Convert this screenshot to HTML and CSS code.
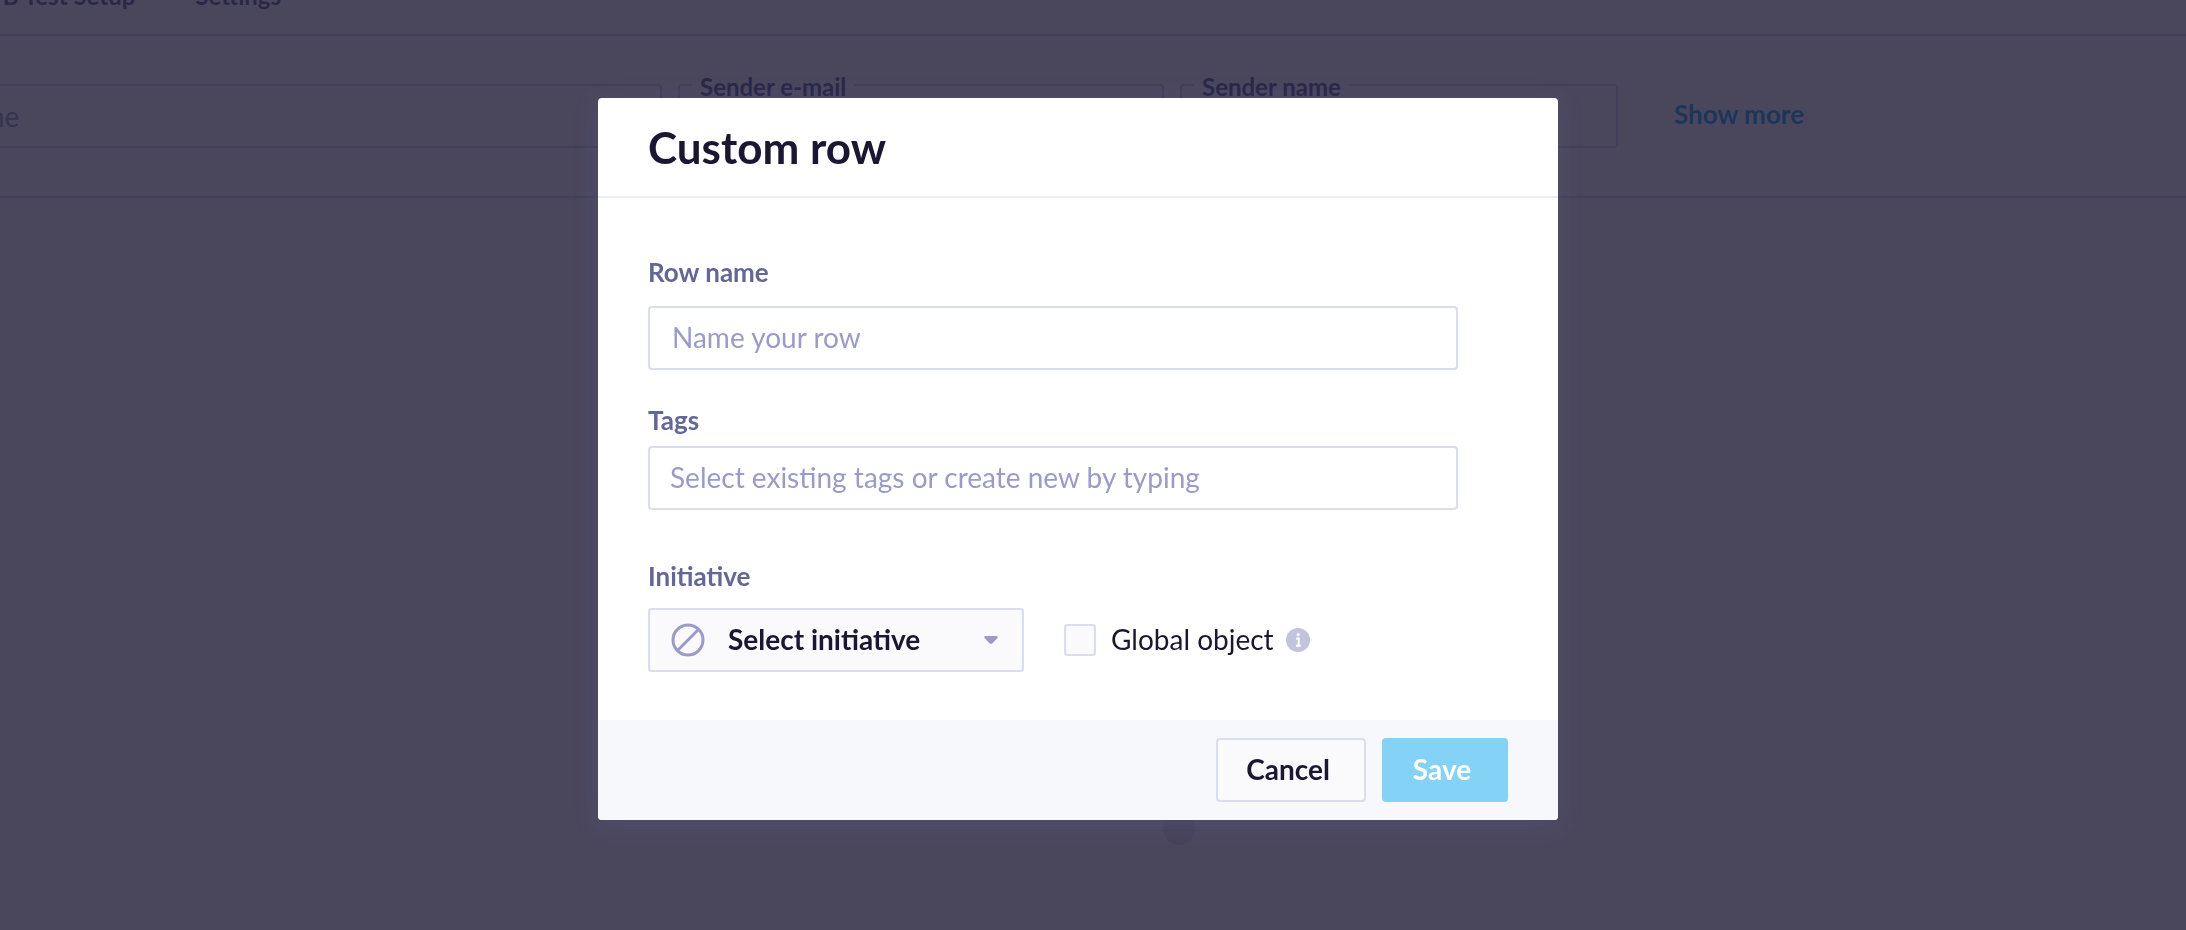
FILE: index.html
```html
<!DOCTYPE html>
<html lang="en">
<head>
<meta charset="utf-8">
<title>Custom row</title>
<link rel="stylesheet" href="styles.css">
</head>
<body>
<div class="page">
  <nav class="tabs">
    <a class="tab" href="#">A/B Test Setup</a>
    <a class="tab" href="#">Settings</a>
  </nav>
  <form class="settings">
    <fieldset class="outlined outlined-first">
      <input class="outlined-input" type="text" placeholder="name" aria-label="Name">
    </fieldset>
    <fieldset class="outlined outlined-email">
      <legend>Sender e-mail</legend>
      <input class="outlined-input" type="email" aria-label="Sender e-mail">
    </fieldset>
    <fieldset class="outlined outlined-name">
      <legend>Sender name</legend>
      <input class="outlined-input" type="text" aria-label="Sender name">
    </fieldset>
    <a class="show-more" href="#">Show more</a>
  </form>
  <main class="canvas"><span class="handle"></span></main>
</div>

<div class="overlay">
  <form class="modal" role="dialog" aria-labelledby="modal-title">
    <header class="modal-header">
      <h1 id="modal-title">Custom row</h1>
    </header>
    <div class="modal-body">
      <div class="field field-name">
        <label for="row-name">Row name</label>
        <input class="text-input" id="row-name" type="text" placeholder="Name your row">
      </div>
      <div class="field field-tags">
        <label for="tags">Tags</label>
        <input class="text-input" id="tags" type="text" placeholder="Select existing tags or create new by typing">
      </div>
      <div class="field field-initiative">
        <label for="initiative">Initiative</label>
        <div class="initiative-row">
          <div class="select">
            <svg class="select-icon" viewBox="0 0 34 34" aria-hidden="true"><circle cx="17" cy="17" r="15"/><path d="M6.8 27.2 27.2 6.8"/></svg>
            <select id="initiative"><option>Select initiative</option></select>
            <svg class="select-caret" viewBox="0 0 14 8" aria-hidden="true"><path d="M1.6 0h10.8c1.2 0 1.8 1 1 2L8.6 7.2c-.9 1-2.3 1-3.2 0L.6 2C-.2 1 .4 0 1.6 0z"/></svg>
          </div>
          <input class="checkbox" id="global" type="checkbox">
          <label class="checkbox-label" for="global">Global object</label>
          <svg class="info" viewBox="0 0 24 24" role="img" aria-label="Info"><circle class="info-disc" cx="12" cy="12" r="12"/><circle class="info-dot" cx="12.2" cy="6.6" r="1.6"/><path d="M10.2 10.6h2.5v7M10 17.7h4.7"/></svg>
        </div>
      </div>
    </div>
    <footer class="modal-footer">
      <button class="button button-cancel" type="button">Cancel</button>
      <button class="button button-save" type="submit">Save</button>
    </footer>
  </form>
</div>
</body>
</html>
```
FILE: styles.css
```css
* {
  box-sizing: border-box;
}

body {
  margin: 0;
  height: 100vh;
  overflow: hidden;
  background: #fff;
  color: #1b1733;
  font-family: Lato, "Liberation Sans", sans-serif;
  font-size: 28px;
}

input,
select,
button {
  font: inherit;
  color: inherit;
}

a {
  text-decoration: none;
}

/* Page behind the dialog */
.page {
  display: flex;
  flex-direction: column;
  height: 100%;
}

.tabs {
  display: flex;
  gap: 60px;
  height: 36px;
  margin-left: -25px;
  border-bottom: 2px solid #dedcf4;
}

.tab {
  margin-top: -20px;
  color: #646699;
  font-size: 24px;
  font-weight: 700;
  line-height: 32px;
}

.settings {
  display: flex;
  align-items: flex-end;
  height: 162px;
  padding-bottom: 48px;
  border-bottom: 2px solid #dedcf4;
}

.outlined {
  flex: none;
  height: 64px;
  margin: 0 16px 0 0;
  padding: 0;
  border: 2px solid #d9d6f0;
  border-radius: 4px;
}

.outlined:has(legend) {
  height: 81px;
}

.outlined legend {
  margin-left: 12px;
  padding: 4px 8px 0;
  color: #646699;
  font-size: 24px;
  font-weight: 700;
  line-height: 32px;
}

.outlined-first {
  width: 722px;
  margin-left: -60px;
}

.outlined-email {
  width: 486px;
}

.outlined-name {
  width: 438px;
}

.outlined-input {
  width: 100%;
  height: 60px;
  padding: 0 10px;
  border: 0;
  background: none;
}

.outlined:has(legend) .outlined-input {
  height: 43px;
}

.show-more {
  align-self: flex-end;
  margin-left: 40px;
  padding-bottom: 2px;
  color: #21acee;
  font-size: 26px;
  font-weight: 700;
  line-height: 64px;
}

.canvas {
  position: relative;
  flex: 1;
}

.handle {
  position: absolute;
  right: calc(50% - 102px);
  bottom: 85px;
  width: 32px;
  height: 32px;
  border-radius: 50%;
  background: #eeebf4;
}

::placeholder {
  color: #9a9bcb;
  opacity: 1;
}

/* Dialog */
.overlay {
  position: fixed;
  inset: 0;
  display: flex;
  justify-content: center;
  align-items: flex-start;
  padding: 98px 30px 0 0;
  background: rgba(27, 23, 50, 0.794);
}

.modal {
  width: 960px;
  overflow: hidden;
  border-radius: 4px;
  background: #fff;
  box-shadow: 0 4px 24px rgba(100, 102, 170, 0.2);
}

.modal-header {
  padding: 21px 50px;
  border-bottom: 2px solid #ebebfa;
}

h1 {
  margin: 0;
  font-size: 44px;
  font-weight: 700;
  line-height: 56px;
}

.modal-body {
  display: flex;
  flex-direction: column;
  padding: 56px 100px 48px 50px;
}

.field {
  display: flex;
  flex-direction: column;
}

.field > label {
  color: #646699;
  font-size: 26px;
  font-weight: 700;
  line-height: 36px;
}

.field-name {
  gap: 16px;
}

.field-tags {
  gap: 8px;
  margin-top: 32px;
}

.field-initiative {
  gap: 14px;
  margin-top: 48px;
}

.text-input {
  width: 100%;
  height: 64px;
  padding: 0 20px 2px;
  border: 2px solid #d9dded;
  border-radius: 4px;
  background: #fff;
}

.field-name .text-input {
  padding-left: 22px;
}

.initiative-row {
  display: flex;
  align-items: center;
}

.select {
  position: relative;
  width: 376px;
}

.select select {
  width: 100%;
  height: 64px;
  padding: 0 48px 2px 78px;
  appearance: none;
  border: 2px solid #d9dded;
  border-radius: 4px;
  background: #fafafd;
  font-weight: 700;
}

.select-icon {
  position: absolute;
  top: 15px;
  left: 23px;
  width: 34px;
  height: 34px;
  fill: none;
  stroke: #9a9bcb;
  stroke-width: 3;
  pointer-events: none;
}

.select-caret {
  position: absolute;
  top: 28px;
  right: 26px;
  width: 14px;
  height: 8px;
  fill: #9a9bcb;
  pointer-events: none;
}

.checkbox {
  width: 32px;
  height: 32px;
  margin: 0 15px 0 40px;
  appearance: none;
  border: 2px solid #d9dded;
  border-radius: 4px;
  background: #fafafd;
}

.checkbox-label {
  padding-bottom: 2px;
}

.info {
  width: 24px;
  height: 24px;
  margin-left: 12px;
  fill: none;
  stroke: #fff;
  stroke-width: 2;
}

.info-disc {
  fill: #c2c3de;
  stroke: none;
}

.info-dot {
  fill: #fff;
  stroke: none;
}

.modal-footer {
  display: flex;
  justify-content: flex-end;
  gap: 16px;
  padding: 18px 50px;
  background: #f6f8fc;
}

.button {
  height: 64px;
  border-radius: 4px;
  font-weight: 700;
}

.button-cancel {
  width: 150px;
  padding: 0 6px 2px 0;
  border: 2px solid #d9dded;
  background: #fafafd;
}

.button-save {
  width: 126px;
  padding: 0 6px 2px 0;
  border: 0;
  background: #84d2f5;
  color: #fff;
}
```
